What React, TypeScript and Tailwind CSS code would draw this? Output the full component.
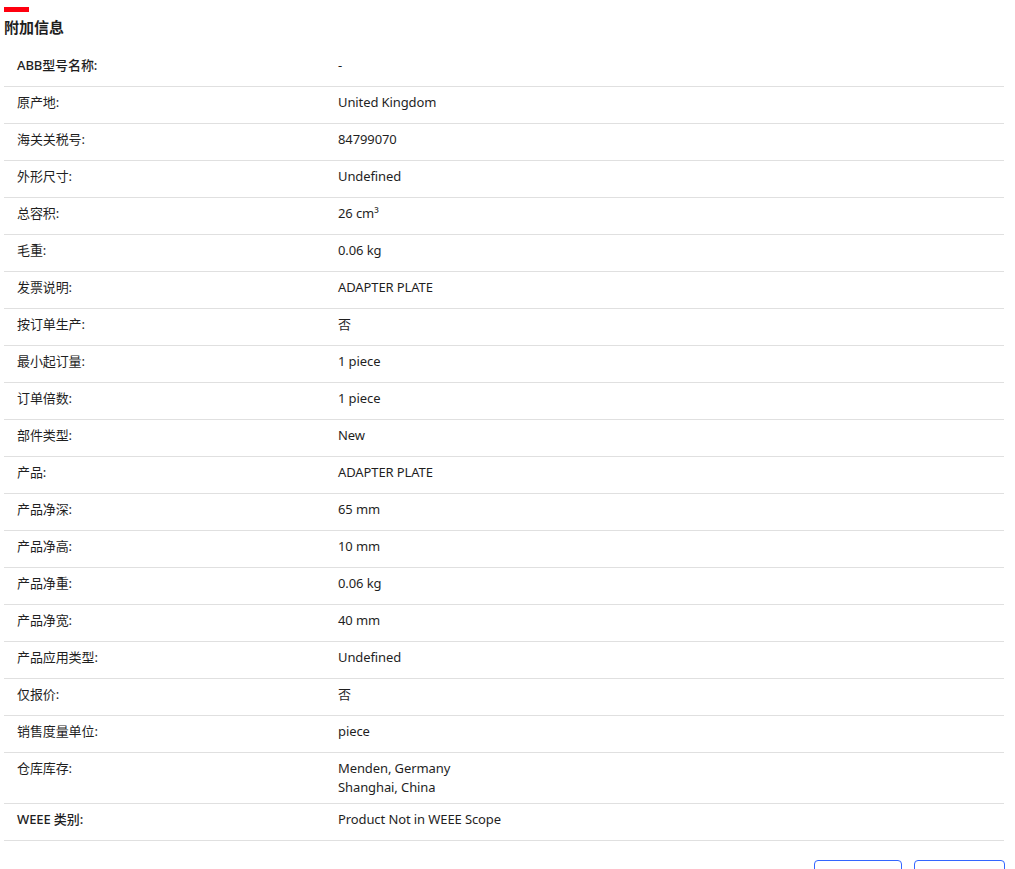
import React from 'react';

const rows: { label: string; value: string[]; strong?: boolean }[] = [
  { label: 'ABB型号名称:', value: ['-'], strong: true },
  { label: '原产地:', value: ['United Kingdom'] },
  { label: '海关关税号:', value: ['84799070'] },
  { label: '外形尺寸:', value: ['Undefined'] },
  { label: '总容积:', value: ['26 cm³'] },
  { label: '毛重:', value: ['0.06 kg'] },
  { label: '发票说明:', value: ['ADAPTER PLATE'] },
  { label: '按订单生产:', value: ['否'] },
  { label: '最小起订量:', value: ['1 piece'] },
  { label: '订单倍数:', value: ['1 piece'] },
  { label: '部件类型:', value: ['New'] },
  { label: '产品:', value: ['ADAPTER PLATE'] },
  { label: '产品净深:', value: ['65 mm'] },
  { label: '产品净高:', value: ['10 mm'] },
  { label: '产品净重:', value: ['0.06 kg'] },
  { label: '产品净宽:', value: ['40 mm'] },
  { label: '产品应用类型:', value: ['Undefined'] },
  { label: '仅报价:', value: ['否'] },
  { label: '销售度量单位:', value: ['piece'] },
  { label: '仓库库存:', value: ['Menden, Germany', 'Shanghai, China'] },
  { label: 'WEEE 类别:', value: ['Product Not in WEEE Scope'], strong: true },
];

export default function App() {
  return (
    <div
      className="min-h-[869px] bg-white pl-1 pt-[7px] text-[#1f1f1f] overflow-hidden"
      style={{ fontFamily: '"Noto Sans", "Noto Sans CJK SC", sans-serif' }}
    >
      {/* Section heading */}
      <div className="h-[5px] w-[25px] bg-[#ff000f]" />
      <h2 className="mt-[5px] text-[15px] font-bold leading-[20px]">附加信息</h2>

      {/* Attribute table */}
      <div className="mt-[13px] w-[1000px]">
        {rows.map((r) => (
          <div
            key={r.label}
            className="grid min-h-[37px] grid-cols-[334px_1fr] border-b border-[#e0e0e0] py-1.5 text-[13px] leading-[19px] tracking-[-0.1px]"
          >
            <div className={`pl-[13px] ${r.strong ? 'font-medium' : ''}`}>{r.label}</div>
            <div>
              {r.value.map((v) => (
                <div key={v}>{v}</div>
              ))}
            </div>
          </div>
        ))}
      </div>

      {/* Actions */}
      <div className="mt-[19px] flex w-[1001px] justify-end gap-3">
        <button className="flex h-9 w-[88px] justify-center rounded border border-[#3366ff] pt-[5px] text-[13px] leading-[19px] text-[#3366ff]">
          查看详情
        </button>
        <button className="h-9 w-[91px] rounded border border-[#3366ff] text-[13px] text-[#3366ff]" />
      </div>
    </div>
  );
}
